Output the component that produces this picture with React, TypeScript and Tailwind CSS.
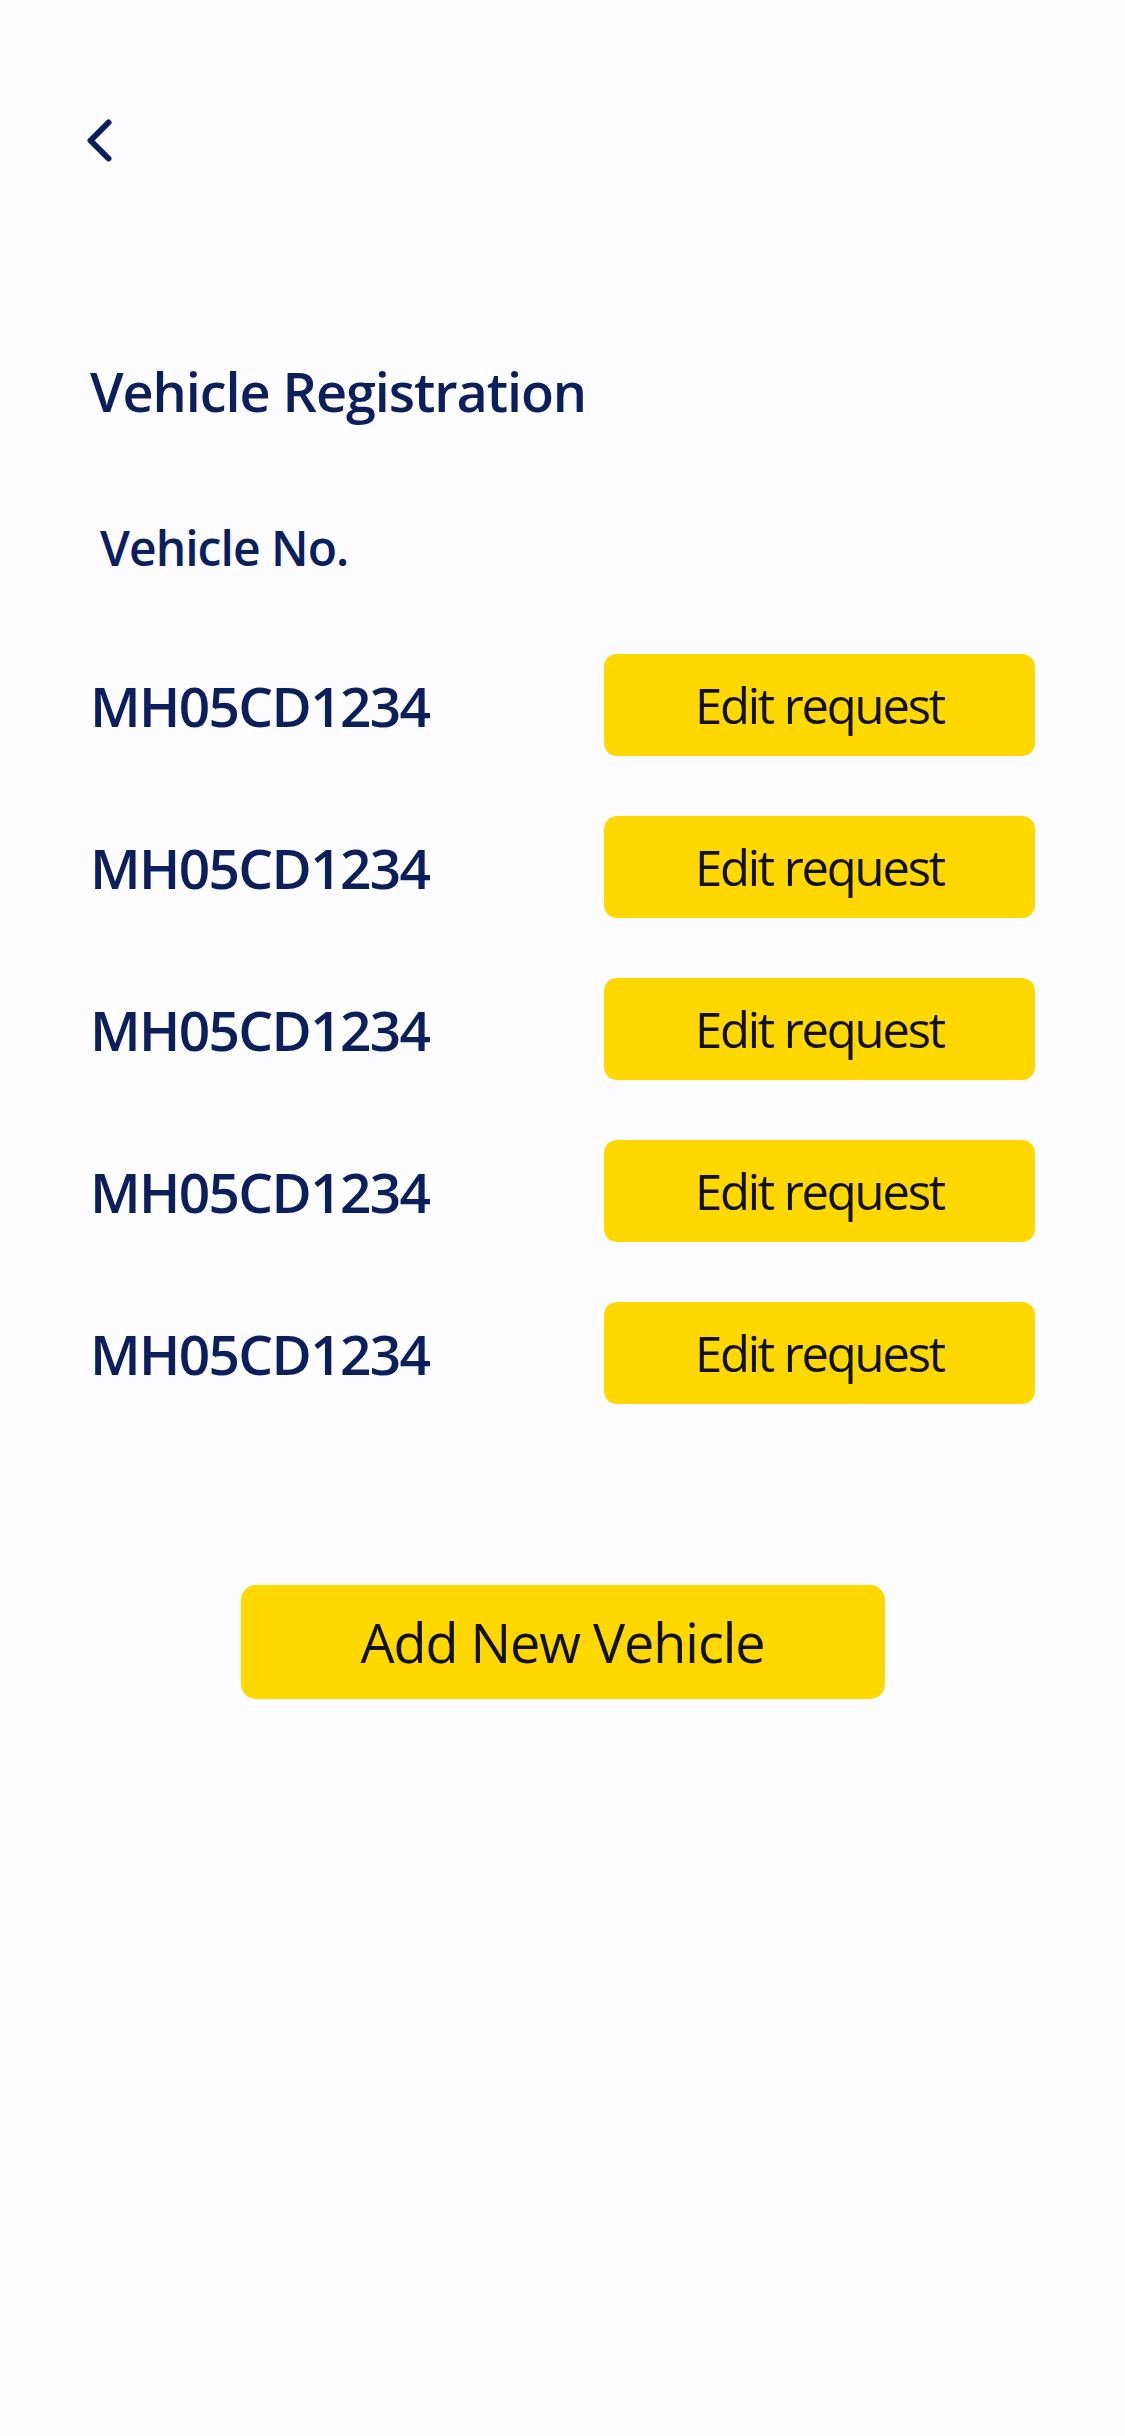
const vehicles = ["MH05CD1234", "MH05CD1234", "MH05CD1234", "MH05CD1234", "MH05CD1234"];

function BackIcon() {
  return (
    <svg width="25" height="43" viewBox="0 0 25 43" fill="none" className="block">
      <polyline
        points="21.5,3.5 3.5,21.5 21.5,39.5"
        stroke="#0b1f5c"
        strokeWidth="6"
        strokeLinecap="round"
        strokeLinejoin="round"
      />
    </svg>
  );
}

export default function App() {
  return (
    <div className="min-h-[2436px] w-[1125px] bg-[#fdfdff] font-['Open_Sans',sans-serif] text-[#0b1f5c]">
      {/* header */}
      <div className="pt-[119px] pl-[87px]">
        <button className="block">
          <BackIcon />
        </button>
      </div>

      <div className="px-[90px]">
        <h1 className="mt-[197px] text-[54px] leading-[64px] font-semibold tracking-[-0.02em]">
          Vehicle Registration
        </h1>

        <p className="mt-[96px] pl-[10px] text-[48px] leading-[58px] font-semibold tracking-[-0.02em]">
          Vehicle No.
        </p>

        <div className="mt-[77px] flex flex-col gap-[60px]">
          {vehicles.map((v, i) => (
            <div key={i} className="flex h-[102px] items-center justify-between">
              <span className="text-[55px] leading-none font-semibold tracking-[-0.03em]">{v}</span>
              <button className="flex h-[102px] w-[431px] items-center justify-center rounded-[13px] bg-[#ffd800] text-[49px] leading-none text-[#111111] tracking-[-0.045em]">
                Edit request
              </button>
            </div>
          ))}
        </div>

        <div className="mt-[181px] flex justify-center">
          <button className="flex h-[114px] w-[644px] items-center justify-center rounded-[15px] bg-[#ffd800] text-[54px] leading-none text-[#111111] tracking-[-0.02em]">
            Add New Vehicle
          </button>
        </div>
      </div>
    </div>
  );
}
